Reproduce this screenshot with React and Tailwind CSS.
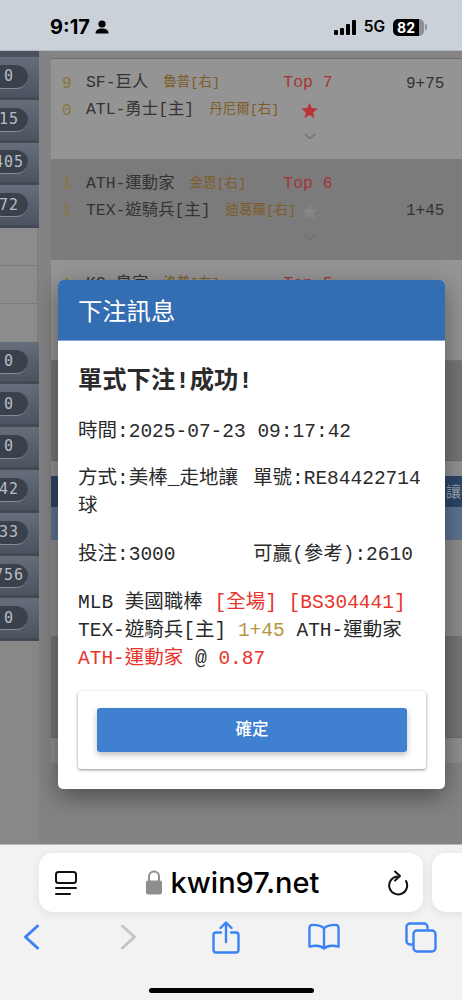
const mono = "font-['Liberation_Mono','Noto_Sans_CJK_TC',monospace]";

const topPills = ["0", "15", "405", "72"];
const bottomPills = ["0", "0", "0", "42", "33", "756", "0"];

const games = [
  { dark: false, a: ["9", "SF-巨人", "魯普[右]"], b: ["0", "ATL-勇士[主]", "丹尼爾[右]"], top: "Top 7", star: true, score: "9+75", scoreLine: 0 },
  { dark: true, a: ["1", "ATH-運動家", "金恩[右]"], b: ["1", "TEX-遊騎兵[主]", "迪葛羅[右]"], top: "Top 6", star: false, score: "1+45", scoreLine: 1 },
  { dark: false, a: ["1", "KC-皇家", "洛普[右]"], b: ["0", "", ""], top: "Top 5", star: false, score: "", scoreLine: 0 },
];

function SidePill({ value }) {
  return (
    <div className="h-[42.8px] flex items-center bg-gradient-to-b from-[#666e7b] to-[#4c5461] border-b-[3px] border-[#434a55]">
      <div className="-ml-[10px] w-[38px] h-[24px] shrink-0 rounded-full bg-[#39414d] border-b border-[#858c96] flex items-center justify-center text-[15px] tracking-[1px] text-[#b9bdc3] font-['DejaVu_Sans_Mono',monospace]">
        {value}
      </div>
    </div>
  );
}

function Sidebar() {
  return (
    <div className="w-[39px] shrink-0 overflow-hidden bg-[#888888]">
      <div className="h-[6px] bg-[#4a515c]" />
      {topPills.map((p, i) => <SidePill key={i} value={p} />)}
      <div className="h-[37.5px] bg-[#8c8c8c] border-b border-[#7c7c7c] border-r-2 border-r-[#808080]" />
      <div className="h-[38px] bg-[#8c8c8c] border-b border-[#7c7c7c] border-r-2 border-r-[#808080]" />
      <div className="h-[38px] bg-[#8c8c8c] border-r-2 border-r-[#808080]" />
      {bottomPills.map((p, i) => <SidePill key={i} value={p} />)}
    </div>
  );
}

function TeamLine({ line }) {
  return (
    <div className="h-[27px] flex items-center">
      <span className="w-[24px] shrink-0 text-[16px] text-[#8a7638]">{line[0]}</span>
      <span className="text-[16.4px] text-[#333333] whitespace-nowrap">{line[1]}</span>
      <span className="ml-[15px] text-[13.5px] text-[#7f5c28] whitespace-nowrap">{line[2]}</span>
    </div>
  );
}

function GameRow({ game }) {
  return (
    <div className={`h-[100.5px] flex pl-[11px] pt-[11px] border-b border-[#7c7c7c] ${mono} ${game.dark ? "bg-[#7b7b7b]" : "bg-[#949494]"}`}>
      <div className="w-[221px] shrink-0">
        <TeamLine line={game.a} />
        <TeamLine line={game.b} />
      </div>
      <div className="w-[54px] shrink-0 flex flex-col items-center -ml-[2px]">
        <div className="h-[27px] flex items-center text-[16.5px] text-[#a5343a] whitespace-pre">{game.top}</div>
        <svg width="17" height="17" viewBox="0 0 24 24" className="mt-[5px] ml-[3px]" fill={game.star ? "#b8333a" : "#858585"}>
          <path d="M12 1l3.2 7.6 8.3.7-6.3 5.4 1.9 8.1L12 18.5 4.9 22.8l1.9-8.1L.5 9.3l8.3-.7z" />
        </svg>
        <svg width="12" height="7" viewBox="0 0 12 7" className="mt-[14px] ml-[3px]" fill="none" stroke="#6e6e6e" strokeWidth="1.2">
          <path d="M1 1l5 4.5L11 1" />
        </svg>
      </div>
      <div className={`pl-[71px] h-[27px] flex items-center text-[16px] text-[#333333] ${game.scoreLine === 1 ? "mt-[27px]" : ""}`}>
        {game.score}
      </div>
    </div>
  );
}

function Content() {
  return (
    <div className="flex-1 min-w-0 ml-[12px] overflow-hidden">
      <div className="h-[8px] bg-[#858585] border-b border-[#6f6f6f]" />
      {games.map((g, i) => <GameRow key={i} game={g} />)}
      <div className="h-[100px] bg-[#757575] border-b border-[#6c6c6c]" />
      <div className="h-[15px] bg-[#929292]" />
      <div className="h-[31px] bg-[#2e4567] flex items-center justify-end whitespace-nowrap text-[15px] text-[#9aa3b1] font-['Noto_Sans_CJK_TC',sans-serif]">
        <span className="-mr-[14px]">讓分</span>
      </div>
      <div className="h-[33px] bg-[#5e7391]" />
      <div className="h-[96px] bg-[#8d8d8d]" />
      <div className="h-[102px] bg-[#747474] border-b border-[#6c6c6c]" />
      <div className="h-[25px] bg-[#8f8f8f]" />
    </div>
  );
}

function Modal() {
  return (
    <div className={`absolute left-[58px] top-[229px] w-[387px] rounded-[5px] bg-white overflow-hidden shadow-[0_8px_24px_rgba(0,0,0,0.4)] ${mono} text-[19.5px] leading-[28px] text-[#2a2a2a]`}>
      <div className="h-[61px] bg-[#336eb2] border-b border-[#7ea6d6] flex items-center px-[20px] text-[24.3px] text-white font-['Noto_Sans_CJK_TC',sans-serif]">
        下注訊息
      </div>
      <div className="px-[20px] pt-[24px] pb-[20px]">
        <div className="text-[24.3px] leading-[34px] font-bold mb-[19px]">單式下注!成功!</div>
        <div className="mb-[19px]">時間:2025-07-23 09:17:42</div>
        <div className="grid grid-cols-[175px_1fr] mb-[20px]">
          <div>方式:美棒_走地讓球</div>
          <div className="whitespace-nowrap">單號:RE84422714</div>
        </div>
        <div className="grid grid-cols-[175px_1fr] mb-[20px]">
          <div>投注:3000</div>
          <div className="whitespace-nowrap">可贏(參考):2610</div>
        </div>
        <div className="mb-[18px] whitespace-pre">
          <div>MLB 美國職棒 <span className="text-[#e8342c]">[全場] [BS304441]</span></div>
          <div>TEX-遊騎兵[主] <span className="text-[#b8963e]">1+45</span> ATH-運動家</div>
          <div><span className="text-[#e8342c]">ATH-運動家</span> @ <span className="text-[#e8342c]">0.87</span></div>
        </div>
        <div className="mr-[-1px] h-[78px] rounded-[3px] bg-white shadow-[0_1px_3px_rgba(0,0,0,0.45)] px-[19px] pt-[17px]">
          <button className="w-full h-[44px] pb-[5px] rounded-[3px] bg-[#3f80d0] shadow-[0_3px_6px_rgba(0,0,0,0.25)] text-white text-[16.5px] font-medium font-['Noto_Sans_CJK_TC',sans-serif]">
            確定
          </button>
        </div>
      </div>
    </div>
  );
}

function StatusBar() {
  return (
    <div className="h-[51px] shrink-0 bg-[#cbd1d9] border-b border-[#b5b9bf] flex items-center pl-[50px] pr-[35px] pt-[4px] font-['Inter',sans-serif] text-black">
      <span className="text-[20px] font-bold leading-none">9:17</span>
      <svg width="14" height="14" viewBox="0 0 14 14" className="ml-[5px]" fill="#000">
        <circle cx="7" cy="4" r="3.6" />
        <path d="M0.5 13.5C0.5 10 3 8.5 7 8.5s6.5 1.5 6.5 5z" />
      </svg>
      <div className="flex-1" />
      <div className="flex items-end gap-[2px] h-[15px]">
        <div className="w-[4px] h-[5px] rounded-[1px] bg-black" />
        <div className="w-[3.5px] h-[7px] rounded-[1px] bg-black" />
        <div className="w-[4px] h-[11px] rounded-[1px] bg-black" />
        <div className="w-[4px] h-[15px] rounded-[1px] bg-black" />
      </div>
      <span className="ml-[8px] text-[15.5px] font-semibold leading-none">5G</span>
      <div className="ml-[8px] w-[31px] h-[17px] rounded-[5px] bg-[#8b8f96] overflow-hidden">
        <div className="w-[26px] h-full rounded-l-[5px] bg-black text-white text-[14px] font-bold leading-[17px] text-center">82</div>
      </div>
      <div className="ml-[1px] w-[2px] h-[6px] rounded-r-full bg-[#8b8f96]" />
    </div>
  );
}

function PageIcon() {
  return (
    <svg width="24" height="26" viewBox="0 0 24 26" fill="none" stroke="#111" strokeWidth="2" strokeLinecap="round">
      <rect x="2" y="2" width="20" height="11" rx="2.5" />
      <path d="M2 18h20M2 24h14" />
    </svg>
  );
}

function LockIcon() {
  return (
    <svg width="18" height="25" viewBox="0 0 18 25" fill="#8e8e8e">
      <path d="M1 12.5a2 2 0 0 1 2-2h12a2 2 0 0 1 2 2V22a2.5 2.5 0 0 1-2.5 2.5h-11A2.5 2.5 0 0 1 1 22z" />
      <path d="M4 11V6.5a5 5 0 0 1 10 0V11" fill="none" stroke="#8e8e8e" strokeWidth="2" />
    </svg>
  );
}

function ReloadIcon() {
  return (
    <svg width="22" height="26" viewBox="0 0 22 26" fill="none" stroke="#111" strokeWidth="2" strokeLinecap="round" strokeLinejoin="round">
      <path d="M9 6.500A9 9 0 1 0 18 11" />
      <path d="M7 1.500L12 6l-5 4.500" />
    </svg>
  );
}

function BottomBar() {
  return (
    <div className="h-[156px] shrink-0 bg-[#f2f2f2] border-t border-[#b9b9b9] overflow-hidden">
      <div className="flex gap-[9px] pl-[39px] pt-[8px]">
        <div className="w-[384px] h-[59px] shrink-0 rounded-[14px] bg-white shadow-[0_2px_10px_rgba(0,0,0,0.08)] flex items-center pl-[15px] pr-[13px]">
          <PageIcon />
          <div className="flex-1 flex items-center justify-center gap-[8px] pr-[2px]">
            <LockIcon />
            <span className="font-['Inter',sans-serif] font-medium text-[29px] leading-none text-black">kwin97.net</span>
          </div>
          <ReloadIcon />
        </div>
        <div className="w-[384px] h-[59px] shrink-0 rounded-[14px] bg-white shadow-[0_2px_10px_rgba(0,0,0,0.08)]" />
      </div>
      <div className="flex justify-between items-center pl-[15px] pr-[25px] mt-[3px] h-[44px]">
        <div className="w-[32px] flex justify-center">
          <svg width="17" height="26" viewBox="0 0 17 26" fill="none" stroke="#3b82f6" strokeWidth="3" strokeLinecap="round" strokeLinejoin="round">
            <path d="M14.5 2L2.5 13l12 11" />
          </svg>
        </div>
        <div className="w-[32px] flex justify-center">
          <svg width="17" height="26" viewBox="0 0 17 26" fill="none" stroke="#c4c4c4" strokeWidth="3" strokeLinecap="round" strokeLinejoin="round">
            <path d="M2.5 2l12 11-12 11" />
          </svg>
        </div>
        <div className="w-[32px] flex justify-center">
          <svg width="28" height="33" viewBox="0 0 28 33" fill="none" stroke="#3b82f6" strokeWidth="2.4" strokeLinecap="round" strokeLinejoin="round">
            <path d="M9 11.5H4a2.5 2.5 0 0 0-2.5 2.5v15A2.5 2.5 0 0 0 4 31.5h20a2.5 2.5 0 0 0 2.5-2.5V14a2.5 2.5 0 0 0-2.5-2.5h-5" />
            <path d="M14 21V2M8.5 7L14 1.5 19.5 7" />
          </svg>
        </div>
        <div className="w-[32px] flex justify-center">
          <svg width="33" height="28" viewBox="0 0 33 28" fill="none" stroke="#3b82f6" strokeWidth="2.4" strokeLinecap="round" strokeLinejoin="round">
            <path d="M16.5 5C14 2.5 10 1.5 5 1.5c-2 0-3.5 1-3.5 3V24c3-.8 5-1 7-1 3.5 0 6 1 8 3 2-2 4.500-3 8-3 2 0 4 .2 7 1V4.500c0-2-1.500-3-3.500-3-5 0-9 1-11.500 3.500z" />
            <path d="M16.5 5v20" />
          </svg>
        </div>
        <div className="w-[32px] flex justify-center">
          <svg width="32" height="31" viewBox="0 0 32 31" fill="none" stroke="#3b82f6" strokeWidth="2.4" strokeLinejoin="round">
            <path d="M7.500 22.500H5a3.500 3.500 0 0 1-3.500-3.500V5A3.500 3.500 0 0 1 5 1.500h14A3.500 3.500 0 0 1 22.500 5v2.500" />
            <rect x="8.500" y="8.500" width="22" height="21" rx="3.500" />
          </svg>
        </div>
      </div>
      <div className="mt-[29px] mx-auto w-[165px] h-[5px] rounded-full bg-black" />
    </div>
  );
}

export default function App() {
  return (
    <div className="w-[462px] h-[1000px] flex flex-col overflow-hidden bg-[#888888]">
      <StatusBar />
      <div className="relative flex-1 min-h-0 flex overflow-hidden bg-[#838383]">
        <Sidebar />
        <Content />
        <Modal />
      </div>
      <BottomBar />
    </div>
  );
}
